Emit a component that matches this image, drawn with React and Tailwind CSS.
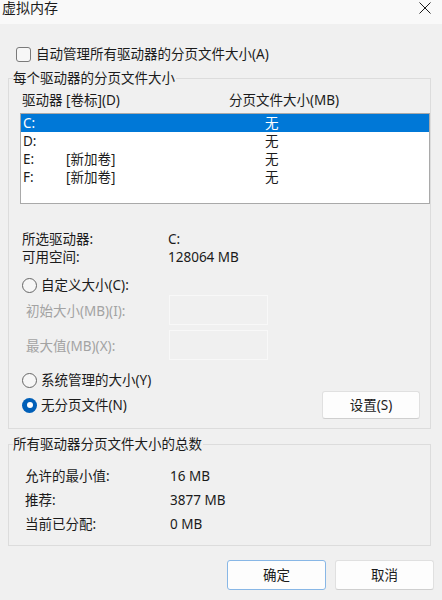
import React from "react";

const FONT = { fontFamily: '"Noto Sans", "Noto Sans CJK SC", "Liberation Sans", sans-serif' };

function Radio({ checked }) {
  if (checked) {
    return (
      <span className="flex h-[15px] w-[15px] shrink-0 items-center justify-center rounded-full bg-[#005fb8]">
        <span className="h-[6px] w-[6px] rounded-full bg-white" />
      </span>
    );
  }
  return <span className="h-[15px] w-[15px] shrink-0 rounded-full border border-[#666666] bg-[#f6f6f6]" />;
}

const rows = [
  { d: "C:", l: "", s: "无", sel: true },
  { d: "D:", l: "", s: "无" },
  { d: "E:", l: "[新加卷]", s: "无" },
  { d: "F:", l: "[新加卷]", s: "无" },
];

export default function App() {
  return (
    <div style={FONT} className="h-[600px] w-[442px] overflow-hidden bg-[#f0f0f0] text-[13.5px] text-[#1b1b1b]">
      {/* Title bar */}
      <div className="flex h-[24px] items-start justify-between bg-[#f9f9f9]">
        <div className="pl-[2px] text-[14px] leading-[16px]">虚拟内存</div>
        <svg width="12" height="12" viewBox="0 0 12 12" className="mr-[11px] mt-[2px]">
          <path d="M0.5 0.5 L11.5 11.5 M11.5 0.5 L0.5 11.5" stroke="#1b1b1b" strokeWidth="1" fill="none" />
        </svg>
      </div>

      {/* Auto manage checkbox */}
      <div className="mt-[20px] flex h-[20px] items-center pl-[16px] leading-[20px]">
        <span className="h-[15px] w-[15px] shrink-0 rounded-[3px] border border-[#7a7a7a] bg-[#f7f7f7]" />
        <span className="ml-[5px]">自动管理所有驱动器的分页文件大小(A)</span>
      </div>

      {/* Group 1 */}
      <fieldset className="ml-[8px] mt-[5px] w-[423px] border border-[#dcdcdc] pb-[9px]">
        <legend className="ml-[4px] pr-[1px] leading-[18px]">每个驱动器的分页文件大小</legend>
        <div className="mt-[4px] flex h-[18px] items-center leading-[18px]">
          <span className="w-[220px] pl-[13px]">驱动器 [卷标](D)</span>
          <span>分页文件大小(MB)</span>
        </div>
        <div className="ml-[11px] mt-[4px] h-[91px] w-[410px] border border-[#a9a9a9] bg-white">
          {rows.map((r) => (
            <div
              key={r.d}
              className={
                "flex h-[18px] items-center leading-[18px] " +
                (r.sel ? "bg-[#0078d7] text-white" : "")
              }
            >
              <span className="w-[45px] pl-[2px]">{r.d}</span>
              <span className="w-[199px]">{r.l}</span>
              <span>{r.s}</span>
            </div>
          ))}
        </div>

        <div className="mt-[26px] flex h-[18px] items-center pl-[13px] leading-[18px]">
          <span className="w-[146px]">所选驱动器:</span>
          <span>C:</span>
        </div>
        <div className="flex h-[18px] items-center pl-[13px] leading-[18px]">
          <span className="w-[146px]">可用空间:</span>
          <span>128064 MB</span>
        </div>

        <div className="mt-[10px] flex h-[19px] items-center pl-[13px] leading-[19px]">
          <Radio />
          <span className="ml-[4px]">自定义大小(C):</span>
        </div>
        <div className="flex h-[30px] items-center pl-[17px] text-[#a3a3a3]">
          <span className="w-[143px] pt-[2px]">初始大小(MB)(I):</span>
          <span className="h-[30px] w-[99px] border border-[#f8f8f8]" />
        </div>
        <div className="mt-[5px] flex h-[30px] items-center pl-[17px] text-[#a3a3a3]">
          <span className="w-[143px] pt-[3px]">最大值(MB)(X):</span>
          <span className="h-[30px] w-[99px] border border-[#f8f8f8]" />
        </div>

        <div className="mt-[10px] flex h-[20px] items-center pl-[13px] leading-[20px]">
          <Radio />
          <span className="ml-[4px]">系统管理的大小(Y)</span>
        </div>
        <div className="mt-[1px] flex h-[28px] items-center justify-between pl-[13px] pr-[10px]">
          <div className="flex items-center">
            <Radio checked />
            <span className="ml-[4px]">无分页文件(N)</span>
          </div>
          <button className="h-[28px] w-[98px] rounded-[3px] border border-[#e0e0e0] border-b-[#cfcfcf] bg-[#fdfdfd] text-[13.5px] leading-[26px] text-[#1b1b1b]">
            设置(S)
          </button>
        </div>
      </fieldset>

      {/* Group 2 */}
      <fieldset className="ml-[8px] mt-[6px] w-[423px] border border-[#dcdcdc] pb-[9px]">
        <legend className="ml-[4px] pr-[1px] leading-[18px]">所有驱动器分页文件大小的总数</legend>
        <div className="mt-[11px] flex h-[24px] items-center pl-[16px] leading-[24px]">
          <span className="w-[145px]">允许的最小值:</span>
          <span>16 MB</span>
        </div>
        <div className="flex h-[24px] items-center pl-[16px] leading-[24px]">
          <span className="w-[145px]">推荐:</span>
          <span>3877 MB</span>
        </div>
        <div className="flex h-[24px] items-center pl-[16px] leading-[24px]">
          <span className="w-[145px]">当前已分配:</span>
          <span>0 MB</span>
        </div>
      </fieldset>

      {/* Bottom buttons */}
      <div className="mt-[14px] flex justify-end gap-[9px] pr-[8px]">
        <button className="h-[30px] w-[99px] rounded-[3px] border border-[#88b7e6] bg-[#fdfdfd] text-[13.5px] leading-[28px] text-[#1b1b1b]">
          确定
        </button>
        <button className="h-[30px] w-[99px] rounded-[3px] border border-[#e0e0e0] border-b-[#cfcfcf] bg-[#fdfdfd] text-[13.5px] leading-[28px] text-[#1b1b1b]">
          取消
        </button>
      </div>
    </div>
  );
}
